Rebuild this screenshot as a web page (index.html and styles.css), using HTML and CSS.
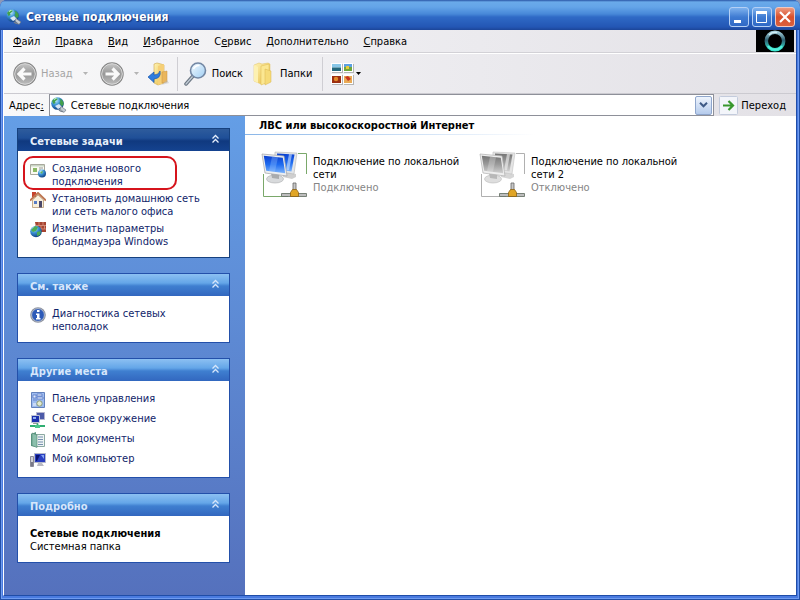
FILE: index.html
```html
<!DOCTYPE html>
<html lang="ru">
<head>
<meta charset="utf-8">
<title>Сетевые подключения</title>
<link rel="stylesheet" href="styles.css">
</head>
<body>
<svg class="defs" width="0" height="0" aria-hidden="true">
  <defs>
    <radialGradient id="globe" cx=".35" cy=".25" r=".8"><stop offset="0" stop-color="#c9f2ff"/><stop offset=".45" stop-color="#3b93d6"/><stop offset="1" stop-color="#0c3a7c"/></radialGradient>
    <linearGradient id="grey" x2="0" y2="1"><stop offset="0" stop-color="#c4c4c4"/><stop offset=".5" stop-color="#989898"/><stop offset="1" stop-color="#bcbcbc"/></linearGradient>
    <linearGradient id="folder" x2="1" y2="1"><stop offset="0" stop-color="#fff3b4"/><stop offset="1" stop-color="#e6bb42"/></linearGradient>
    <linearGradient id="lens" x2="1" y2="1"><stop offset="0" stop-color="#f4fbff"/><stop offset="1" stop-color="#9fcdf3"/></linearGradient>
    <linearGradient id="blueScreen" x2="0" y2="1"><stop offset="0" stop-color="#0a3fd0"/><stop offset=".5" stop-color="#1f6cf0"/><stop offset="1" stop-color="#7db4fb"/></linearGradient>
    <linearGradient id="greyScreen" x2="0" y2="1"><stop offset="0" stop-color="#747474"/><stop offset=".5" stop-color="#9c9c9c"/><stop offset="1" stop-color="#d0d0d0"/></linearGradient>
    <linearGradient id="ring" x2="0" y2="1"><stop offset="0" stop-color="#9fc9d6"/><stop offset=".45" stop-color="#2d5f70"/><stop offset="1" stop-color="#35e6cf"/></linearGradient>
  </defs>
  <symbol id="i-net" viewBox="0 0 16 16">
    <circle cx="6.500" cy="6.500" r="6.300" fill="url(#globe)"/>
    <path d="M1 4Q3 .8 6 .8L6.500 2.500 4 4.500 4.500 6 2.500 7ZM8 1.500q3 .5 4.500 3.500v3l-2 1-2-3 1-2z" fill="#43a04c"/>
    <path d="M3 2.500q1-1 2.500-1" stroke="#d8ffe0" fill="none"/>
    <path d="M4 9l4-2 3 3-4 2z" fill="#d9e6f4"/>
    <path d="M8 13q3 2.500 5 1" fill="none" stroke="#77808c" stroke-width="1.300"/>
    <path d="M10 9.500l5 3.500-2 2.500-4-3.500z" fill="#c4ccd4" stroke="#66707c" stroke-width=".6"/>
  </symbol>
  <symbol id="i-chev" viewBox="0 0 9 10"><path d="M1.500 4.500l3-3 3 3M1.500 8.500l3-3 3 3" fill="none" stroke="currentColor" stroke-width="1.300"/></symbol>
  <symbol id="i-back" viewBox="0 0 24 24">
    <circle cx="12" cy="12" r="11.700" fill="#858585"/><circle cx="12" cy="12" r="10.300" fill="url(#grey)" stroke="#dcdcdc" stroke-width="1"/>
    <path d="M11.500 6.500L6 12l5.500 5.500M7 12h11.500" fill="none" stroke="#fafafa" stroke-width="3.200"/>
  </symbol>
  <symbol id="i-down" viewBox="0 0 5 3"><path d="M0 0h5L2.500 3z" fill="currentColor"/></symbol>
  <symbol id="i-plug" viewBox="0 0 48 48">
    <path d="M32 33h3v8h-3z" fill="#c7c7c7" stroke="#666" stroke-width=".8"/>
    <path d="M20.500 43.500h25v3h-25z" fill="#bdbdbd" stroke="#5d6a5d" stroke-width=".8"/>
    <path d="M31.500 39.500h4l2 3v4h-8v-4z" fill="#e0a526" stroke="#8a6113" stroke-width=".8"/>
  </symbol>
</svg>

<div class="window">
  <header class="titlebar">
    <svg class="i16"><use href="#i-net"/></svg>
    <h1>Сетевые подключения</h1>
    <div class="caption">
      <button class="cap" aria-label="Свернуть"><svg viewBox="0 0 20 20"><path d="M5 13h7v3H5z" fill="#fff"/></svg></button>
      <button class="cap" aria-label="Развернуть"><svg viewBox="0 0 20 20"><path d="M4.500 6v9.500h10V6z" fill="none" stroke="#fff"/><path d="M4 4h11v3H4z" fill="#fff"/></svg></button>
      <button class="cap cap-close" aria-label="Закрыть"><svg viewBox="0 0 20 20"><path d="M5 5l10 10M15 5L5 15" stroke="#fff" stroke-width="2.200"/></svg></button>
    </div>
  </header>

  <div class="client">
    <nav class="menubar">
      <button><u>Ф</u>айл</button>
      <button><u>П</u>равка</button>
      <button><u>В</u>ид</button>
      <button><u>И</u>збранное</button>
      <button>С<u>е</u>рвис</button>
      <button><u>Д</u>ополнительно</button>
      <button><u>С</u>правка</button>
      <svg class="throbber" viewBox="0 0 38 22"><path fill="#000" d="M0 0h38v22H0z"/><circle cx="19" cy="11" r="8.700" fill="none" stroke="url(#ring)" stroke-width="3.500"/><path d="M12 16a8.700 8.700 0 0 0 14 0" fill="none" stroke="#54f0da" stroke-width="2"/><path d="M13 5a8.700 8.700 0 0 1 8-2.500" fill="none" stroke="#d3eef5" stroke-width="1.500"/></svg>
    </nav>

    <div class="toolbar">
      <button class="tool off"><svg class="i24"><use href="#i-back"/></svg>Назад<svg class="arrow"><use href="#i-down"/></svg></button>
      <button class="tool off" aria-label="Вперед"><svg class="i24 flip"><use href="#i-back"/></svg><svg class="arrow"><use href="#i-down"/></svg></button>
      <button class="tool up" aria-label="Вверх"><svg class="i24" viewBox="0 0 24 24"><path d="M7 2l3-1 4 1 3 1v18l-6 2-4-2z" fill="url(#folder)" stroke="#cfa64a" stroke-width=".6"/><path d="M11 4l6-2v19l-6 2z" fill="#f6cf76"/><path d="M15 10l5-1v11l-5 1z" fill="#eab65c" stroke="#c9933c" stroke-width=".5"/><path d="M20 18l2 3-8 2z" fill="#b9b9b9" opacity=".5"/><path d="M1 15l6-5v3q5 0 6-4 1.500 7-6 8v3.500z" fill="#2f7ddf" stroke="#1b57ae" stroke-width=".7"/></svg></button>
      <span class="sep"></span>
      <button class="tool find"><svg class="i24" viewBox="0 0 24 24"><path d="M9 14l-7 8" stroke="#6d7885" stroke-width="3.500" stroke-linecap="round"/><path d="M9 14l-7 8" stroke="#c3ccd6" stroke-width="1.200" stroke-linecap="round"/><circle cx="14" cy="8.500" r="7.500" fill="url(#lens)" stroke="#7387a4" stroke-width="1.600"/><path d="M9.500 7q2-4 6-3.500" stroke="#fff" stroke-width="1.500" fill="none"/></svg>Поиск</button>
      <button class="tool folders"><svg class="i24" viewBox="0 0 24 24"><path d="M2 3l5-2 3 1 6-1 2 1v18l-9 2-7-3z" fill="url(#folder)" stroke="#e0c060" stroke-width=".5"/><path d="M9 4l8-2v18l-8 3z" fill="#fbe792" stroke="#dcb850" stroke-width=".5"/><path d="M13 7l6 2v11l-6 3z" fill="#f6db78" stroke="#d8b450" stroke-width=".5"/><path d="M2 3l4 2v16l-4-2z" fill="#fdf1b2"/></svg>Папки</button>
      <span class="sep"></span>
      <button class="tool views" aria-label="Вид"><svg class="i24" viewBox="0 0 24 24"><path fill="#b4b4b4" d="M2 2h11v9H2zM14 2h10v9H14zM2 13h11v10H2zM14 13h10v10H14z"/><path fill="#fff" d="M1 1h11v9H1zM13 1h10v9H13zM1 12h11v10H1zM13 12h10v10H13z"/><path fill="#88c7e8" d="M2 2h9v3.500H2z"/><path fill="#24687c" d="M2 5.500h9V9H2z"/><path fill="#5b9fe0" d="M14 2h8v3h-8z"/><path fill="#6fa637" d="M14 5h8v4h-8z"/><path fill="#e6ca3a" d="M16 4h3v3h-3z"/><path fill="#9c2f10" d="M2 14h9v7H2z"/><circle cx="6" cy="17" r="2.200" fill="#e38a2b"/><path fill="#e9aa55" d="M14 14h8v7h-8z"/><path fill="#c8341f" d="M15 15l3-1 3 3-3 2z"/></svg><svg class="arrow"><use href="#i-down"/></svg></button>
    </div>

    <form class="address">
      <label for="addr">Адрес<u>:</u></label>
      <div class="field">
        <svg class="i16"><use href="#i-net"/></svg>
        <input id="addr" type="text" value="Сетевые подключения">
        <button type="button" class="drop" aria-label="Список адресов"><svg viewBox="0 0 9 6"><path d="M1 .8l3.500 3.500L8 .8" fill="none" stroke="#3e5a86" stroke-width="2"/></svg></button>
      </div>
      <button type="button" class="go"><svg viewBox="0 0 19 19"><rect x=".5" y=".5" width="18" height="18" rx="1" fill="#f3f5fa" stroke="#c3cbdc"/><path d="M4 9.500h9M9.500 5l4.500 4.500L9.500 14" fill="none" stroke="#37972c" stroke-width="2.200"/></svg>Переход</button>
    </form>

    <div class="content">
      <aside class="sidebar">
        <section class="panel primary">
          <button class="head">Сетевые задачи<svg class="chev"><use href="#i-chev"/></svg></button>
          <div class="body">
            <a href="#" class="task marked"><svg class="i16" viewBox="0 0 16 16"><path d="M.5 2.500h14v10H.5z" fill="#fafaf2" stroke="#a8a89c"/><path d="M1 3h13v1.500H1z" fill="#c9d4c4"/><path d="M3 6h4v4H3z" fill="#8bb965"/><path d="M9 6h4M9 8h2" stroke="#999"/><circle cx="12" cy="11.500" r="4" fill="url(#globe)"/><path d="M10 10l3-1-1 3z" fill="#63b15c"/></svg><span>Создание нового подключения</span></a>
            <a href="#" class="task"><svg class="i16" viewBox="0 0 16 16"><path d="M2.500 8v7.500h11V8L8 3z" fill="#f7eedb" stroke="#b79a73" stroke-width=".8"/><path d="M2 0h4v5H2z" fill="#c6432c"/><path d="M0 8.500L8 1l8 7.500" fill="none" stroke="#bd7650" stroke-width="2"/><path d="M4 9h3v3H4z" fill="#567cc5"/><path d="M9 9h3v6.500H9z" fill="#4a4769"/></svg><span>Установить домашнюю сеть или сеть малого офиса</span></a>
            <a href="#" class="task"><svg class="i16" viewBox="0 0 16 16"><path d="M5 0h11v10H7z" fill="#a64431"/><path d="M5 3.500h11M6 7h10M9 0v3.500M13 0v3.500M11 3.500V7M14.500 3.500V7" stroke="#db9783" stroke-width=".8"/><circle cx="6" cy="9.500" r="5.800" fill="url(#globe)"/><path d="M1 8l4-4 3 1-2 4-3 1zM7 10l4-1-1 4-3 1z" fill="#4dac55"/></svg><span>Изменить параметры брандмауэра Windows</span></a>
          </div>
        </section>
        <section class="panel">
          <button class="head">См. также<svg class="chev"><use href="#i-chev"/></svg></button>
          <div class="body">
            <a href="#" class="task"><svg class="i16" viewBox="0 0 16 16"><circle cx="8" cy="8" r="7.800" fill="#8d929e"/><circle cx="8" cy="8" r="6.400" fill="#2d5ab8" stroke="#c4cad6" stroke-width=".8"/><path d="M7 3h2.500v2H7zM6 6.500h3.500V11h1v1.500H6V11h1V8H6z" fill="#fff"/></svg><span>Диагностика сетевых неполадок</span></a>
          </div>
        </section>
        <section class="panel">
          <button class="head">Другие места<svg class="chev"><use href="#i-chev"/></svg></button>
          <div class="body">
            <a href="#" class="task"><svg class="i16" viewBox="0 0 16 16"><path d="M1.500.5h13v15h-13z" fill="#9ebcf0" stroke="#6482bd"/><path d="M3 3h3v3H3zM7 2h5v2H7zM7 5h6v2H7zM3 8h4" fill="#dfeafc" stroke="#4a6fbf" stroke-width=".7"/><circle cx="9.500" cy="11.500" r="2.700" fill="#e2ead0" stroke="#8b9b78"/><path d="M3 11h3v3H3z" fill="#c9daf6"/></svg><span>Панель управления</span></a>
            <a href="#" class="task"><svg class="i16" viewBox="0 0 16 16"><path d="M6.500.5h8v7h-8z" fill="#4c5aa8" stroke="#b5b5cf"/><path d="M1.500 3.500h8v7h-8z" fill="#1b2fae" stroke="#bfc3d4"/><path d="M3 5h3v2H3z" fill="#8faef0"/><path d="M3 11h5v1H3z" fill="#999"/><path d="M0 14h15M7.500 11.500v3" stroke="#2fae72" stroke-width="1.800"/><path d="M5 13h5v3H5z" fill="#4bc58b"/></svg><span>Сетевое окружение</span></a>
            <a href="#" class="task"><svg class="i16" viewBox="0 0 16 16"><path d="M1 2l5-2v15l-5-1z" fill="#5c9983"/><path d="M5.500 2.500h9v12h-9z" fill="#eef4f3" stroke="#8ca9a2"/><path d="M2 1l5 2v12.500l-5-2z" fill="#8bbfac" stroke="#508472" stroke-width=".6"/><path d="M8 5h5M8 7.500h5M8 10h5M8 12.500h5" stroke="#7790b0"/></svg><span>Мои документы</span></a>
            <a href="#" class="task"><svg class="i16" viewBox="0 0 16 16"><path d="M4.500 1.500h11v9h-11z" fill="#2a3fc0" stroke="#b4b8ca"/><path d="M6 3h4L7 9H6z" fill="#0a1370"/><path d="M11 3h3v4z" fill="#84a4f4"/><path d="M8 11h4l2 3H7z" fill="#b9b9c2"/><path d="M.5 4.500h3v10h-3z" fill="#d2d2d8" stroke="#8b8b98"/><path d="M1 10h2v4H1z" fill="#7a7a88"/></svg><span>Мой компьютер</span></a>
          </div>
        </section>
        <section class="panel">
          <button class="head">Подробно<svg class="chev"><use href="#i-chev"/></svg></button>
          <div class="body details"><b>Сетевые подключения</b><span>Системная папка</span></div>
        </section>
      </aside>

      <main class="main">
        <h2>ЛВС или высокоскоростной Интернет</h2>
        <div class="items">
          <a href="#" class="conn">
            <svg class="i48" viewBox="0 0 48 48"><path d="M37 3.500h8.500V24M2.500 24v22.500H27" fill="none" stroke="#7aa86a"/><path d="M22 22l13 2v3l-4 2-9-2z" fill="#cfcfcf"/><path d="M14 2l22 1-3 21-20-3z" fill="#e2e5e8" stroke="#aaa" stroke-width=".5"/><path d="M16 3.500l17.500 1-3 17-14-2z" fill="url(#blueScreen)"/><path d="M28 4l3 .3-3 16h-3z" fill="#cfe4ff" opacity=".6"/><ellipse cx="14" cy="29" rx="8.500" ry="4" fill="#d8dadc" stroke="#a9abad" stroke-width=".6"/><path d="M10 23l8 1v5l-7-1z" fill="#a9abad"/><path d="M1 4l22 2 3 20-22-3z" fill="#eceef0" stroke="#a0a2a6" stroke-width=".7"/><path d="M2.800 5.800l19 2 2.400 15.500-19-2.500z" fill="url(#blueScreen)"/><path d="M11 6.700l6 .6-3 14.500-6-.8z" fill="#a9d2ff" opacity=".3"/><use href="#i-plug"/></svg>
            <span class="conn-text"><span>Подключение по локальной сети</span><small>Подключено</small></span>
          </a>
          <a href="#" class="conn">
            <svg class="i48" viewBox="0 0 48 48"><path d="M37 3.500h8.500V24M2.500 24v22.500H27" fill="none" stroke="#b0b0b0"/><path d="M22 22l13 2v3l-4 2-9-2z" fill="#d6d6d6"/><path d="M14 2l22 1-3 21-20-3z" fill="#e4e4e4" stroke="#bbb" stroke-width=".5"/><path d="M16 3.500l17.500 1-3 17-14-2z" fill="url(#greyScreen)"/><path d="M28 4l3 .3-3 16h-3z" fill="#f4f4f4" opacity=".6"/><ellipse cx="14" cy="29" rx="8.500" ry="4" fill="#dedede" stroke="#b9b9b9" stroke-width=".6"/><path d="M10 23l8 1v5l-7-1z" fill="#b8b8b8"/><path d="M1 4l22 2 3 20-22-3z" fill="#eee" stroke="#b0b0b0" stroke-width=".7"/><path d="M2.800 5.800l19 2 2.400 15.500-19-2.500z" fill="url(#greyScreen)"/><path d="M11 6.700l6 .6-3 14.500-6-.8z" fill="#eee" opacity=".3"/><use href="#i-plug"/></svg>
            <span class="conn-text"><span>Подключение по локальной сети 2</span><small>Отключено</small></span>
          </a>
        </div>
      </main>
    </div>
  </div>
</div>
</body>
</html>
```
FILE: styles.css
```css
* { box-sizing: border-box; }

body {
  margin: 0;
  background: #8c98b8;
  font: 11px/13px Tahoma, "DejaVu Sans Condensed", "Noto Sans", sans-serif;
  color: #000;
}

button {
  margin: 0;
  padding: 0;
  border: 0;
  background: none;
  font: inherit;
  color: inherit;
  text-align: left;
}

a { color: inherit; text-decoration: none; }
svg { display: block; flex: none; }
.defs { position: absolute; }
.i16 { width: 16px; height: 16px; }
.i24 { width: 24px; height: 24px; }
.i48 { width: 48px; height: 48px; }

.window {
  display: flex;
  flex-direction: column;
  min-height: 100vh;
  padding: 0 3px 4px;
  border-radius: 7px 7px 0 0;
  background: #4a7be0;
  box-shadow: inset 0 0 0 1px #2350a8, inset 0 0 0 2px #6f9cf0;
}

.titlebar {
  display: flex;
  align-items: center;
  gap: 4px;
  height: 30px;
  margin: 0 -3px;
  padding: 3px 5px 0 6px;
  border-radius: 7px 7px 0 0;
  background: linear-gradient(#2a55a6 0, #6aaaea 2px, #64a4e8 7px, #4788d8 14px, #2f6ac6 17px, #2356b4 27px, #1c4598 30px);
}

.titlebar h1 {
  flex: 1;
  margin: 0;
  font-size: 12px;
  line-height: 16px;
  color: #fff;
  text-shadow: 1px 1px 1px #12357c;
}

.caption { display: flex; gap: 3px; }

.cap {
  width: 20px;
  height: 20px;
  border: 1px solid #b5d0f5;
  border-radius: 3px;
  background: linear-gradient(#7eb2ee, #3f7bd2 50%, #3069c6);
}

.cap svg { margin: -1px; width: 20px; height: 20px; }
.cap-close { border-color: #f0c8c0; background: linear-gradient(#ee9a80, #d8502c 50%, #d9603e); }

.client {
  display: flex;
  flex: 1;
  flex-direction: column;
  border: 1px solid #1f4da8;
  border-width: 0 1px 1px 0;
  border-left: 1px solid #fff;
  background: #fff;
}

.menubar, .toolbar, .address { background: linear-gradient(90deg, #f8f8f9, #ebeaee 60%, #e3e1e6); }

.menubar {
  display: flex;
  align-items: center;
  gap: 15px;
  height: 23px;
  padding: 0 2px 0 9px;
  border-bottom: 1px solid #d2d1d6;
}

.throbber { width: 38px; height: 22px; margin-left: auto; }

.toolbar {
  display: flex;
  align-items: center;
  height: 41px;
  padding-left: 9px;
  border-top: 1px solid #fff;
  border-bottom: 1px solid #cbcad0;
}

.tool { display: flex; align-items: center; gap: 4px; }
.off { margin-right: 12px; color: #a5a5a5; }
.off .arrow { margin-left: 6px; color: #b4b4b4; }
.flip { transform: scaleX(-1); }
.arrow { width: 5px; height: 3px; }
.up { margin-left: -4px; }
.sep { width: 1px; height: 34px; margin: 0 6px; background: #cfced3; }
.folders { margin: 0 4px 0 9px; }
.views { margin-left: 1px; gap: 2px; }

.address {
  display: flex;
  align-items: center;
  gap: 5px;
  height: 22px;
  padding: 0 10px 0 5px;
}

.field {
  display: flex;
  flex: 1;
  align-items: center;
  gap: 4px;
  height: 22px;
  padding: 0 1px;
  border: 1px solid #8e9099;
  background: #fff;
}

.field input {
  flex: 1;
  min-width: 0;
  padding: 0;
  border: 0;
  outline: 0;
  background: none;
  font: inherit;
  color: #000;
}

.drop {
  display: grid;
  place-items: center;
  width: 17px;
  height: 19px;
  border: 1px solid #8fa6cc;
  border-radius: 2px;
  background: linear-gradient(#eef4fd, #b5cbec);
}

.drop svg { width: 9px; height: 6px; }
.go { display: flex; align-items: center; gap: 3px; }
.go svg { width: 19px; height: 19px; }

.content { display: flex; flex: 1; }

.sidebar {
  display: flex;
  flex-direction: column;
  gap: 15px;
  width: 241px;
  padding: 12px 15px 15px 13px;
  background: linear-gradient(#649ee6, #5571bd);
}

.panel { border: 1px solid #2350aa; background: #fff; }
.primary { border-color: #16417f; }

.head {
  display: flex;
  align-items: center;
  justify-content: space-between;
  width: 100%;
  height: 22px;
  padding: 2px 9px 0 12px;
  background: linear-gradient(#8cc0f2 0, #64a6e8 9px, #3f7fd0 12px, #3267bf 22px);
  font-weight: bold;
  color: #d6e6fb;
}

.primary .head {
  background: linear-gradient(#2e5c9c 0, #1f4f98 9px, #10397f 12px, #154390 22px);
  color: #e6effc;
}

.chev { width: 9px; height: 10px; margin-top: -4px; }

.body {
  display: flex;
  flex-direction: column;
  gap: 4px;
  padding: 11px 20px 9px 12px;
  color: #10246a;
}

.details { gap: 0; color: #000; }
.task { position: relative; display: flex; gap: 6px; min-height: 16px; }

.marked::after {
  content: "";
  position: absolute;
  inset: -6px 32px -2px -7px;
  border: 2px solid #d6141c;
  border-radius: 10px;
}

.main { flex: 1; min-width: 0; }

.main h2 {
  height: 19px;
  margin: 0;
  padding: 3px 14px;
  background: linear-gradient(90deg, #8ab6e8, #fff) bottom left / 290px 1px no-repeat;
  font-size: 11px;
  line-height: 13px;
}

.items {
  display: flex;
  flex-wrap: wrap;
  gap: 18px;
  padding: 15px 16px;
}

.conn { display: flex; gap: 4px; width: 200px; }
.conn-text { flex: 1; padding-top: 5px; }
.conn small { display: block; font-size: 11px; color: #858585; }
```
